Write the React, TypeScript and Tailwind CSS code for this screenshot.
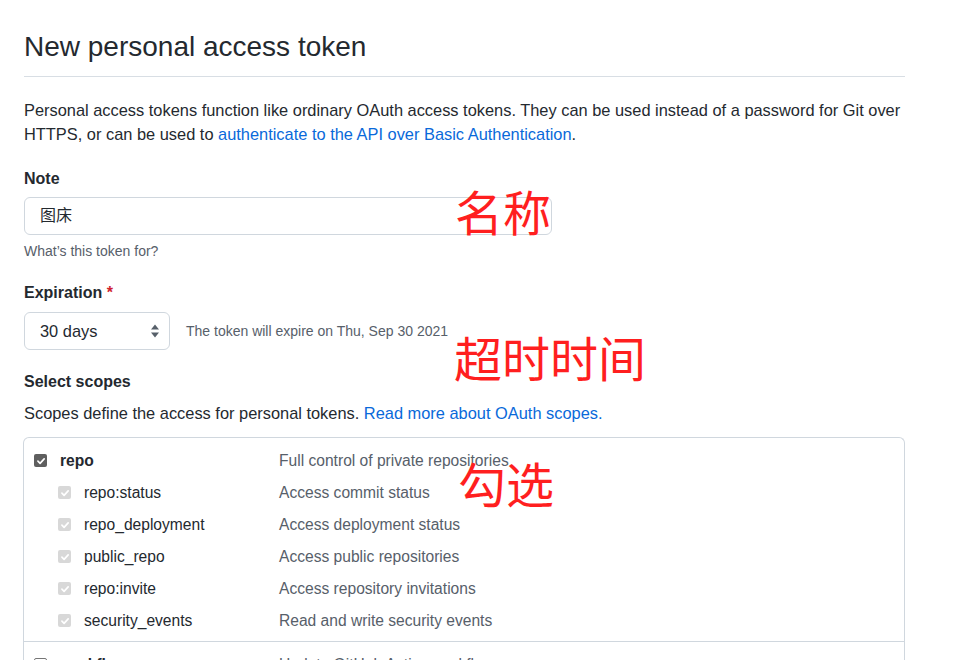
const font = { fontFamily: '"Liberation Sans", "Noto Sans CJK SC", sans-serif' }
const cjk = { fontFamily: '"Noto Sans CJK SC", sans-serif' }

const subScopes = [
  { name: 'repo:status', desc: 'Access commit status' },
  { name: 'repo_deployment', desc: 'Access deployment status' },
  { name: 'public_repo', desc: 'Access public repositories' },
  { name: 'repo:invite', desc: 'Access repository invitations' },
  { name: 'security_events', desc: 'Read and write security events' },
]

function Check({ state }: { state: 'on' | 'disabled' | 'off' }) {
  if (state === 'off') {
    return <span className="block h-[13px] w-[13px] rounded-[2px] border border-[#767676] bg-white" />
  }
  return (
    <span
      className={`flex h-[13px] w-[13px] items-center justify-center rounded-[2px] ${state === 'on' ? 'bg-[#5f5f5f]' : 'bg-[#d8d8d8]'}`}
    >
      <svg viewBox="0 0 12 12" className="h-[10px] w-[10px]">
        <path d="M2.3 6.2 4.9 8.8 9.8 3.4" fill="none" stroke="white" strokeWidth="2" strokeLinecap="round" strokeLinejoin="round" />
      </svg>
    </span>
  )
}

function SelectArrows() {
  return (
    <svg viewBox="0 0 10 16" className="h-[16px] w-[10px] text-[#57606a]">
      <path d="M5 1.5 9 6.5H1Z M5 14.5 1 9.5H9Z" fill="currentColor" />
    </svg>
  )
}

export default function App() {
  return (
    <div className="relative min-h-[660px] w-[975px] overflow-hidden bg-white text-[#24292f]" style={font}>
      <div className="w-[881px] ml-6 pt-[29px]">
        <h1 className="border-b border-[#d8dee4] pb-[11px] text-[28px] font-normal leading-[36px]">New personal access token</h1>

        <p className="mt-[21px] text-[16.4px] leading-6">
          Personal access tokens function like ordinary OAuth access tokens. They can be used instead of a password for Git over
          HTTPS, or can be used to <a className="text-[#0969da]">authenticate to the API over Basic Authentication</a>.
        </p>

        <div className="mt-[21px]">
          <label className="block text-[16px] font-semibold leading-6">Note</label>
          <div className="mt-[6px] flex h-[38px] w-[528px] items-center rounded-md border border-[#d0d7de] px-[15px] text-[16px]">
            图床
          </div>
          <p className="mt-[6px] text-[14px] leading-5 text-[#57606a]">What’s this token for?</p>
        </div>

        <div className="mt-[20px]">
          <label className="block text-[16px] font-semibold leading-6">
            Expiration <span className="text-[#cf222e]">*</span>
          </label>
          <div className="mt-[7px] flex items-center gap-4">
            <div className="flex h-[38px] w-[146px] items-center justify-between rounded-md border border-[#d0d7de] pl-[15px] pr-[9px] text-[16.4px]">
              <span>30 days</span>
              <SelectArrows />
            </div>
            <span className="text-[14px] text-[#57606a]">The token will expire on Thu, Sep 30 2021</span>
          </div>
        </div>

        <div className="mt-[20px]">
          <h2 className="text-[16px] font-semibold leading-6">Select scopes</h2>
          <p className="mt-[7px] text-[16.4px] leading-6">
            Scopes define the access for personal tokens. <a className="text-[#0969da]">Read more about OAuth scopes.</a>
          </p>
        </div>

        <div className="-ml-px mt-[12px] rounded-t-md border-x border-t border-[#d0d7de]">
          <div className="border-b border-[#d0d7de] pb-[4px] pt-[7px] pl-[10px] text-[15.6px]">
            <div className="grid h-8 grid-cols-[245px_1fr] items-center">
              <div className="flex items-center gap-[13px]">
                <Check state="on" />
                <span className="font-semibold">repo</span>
              </div>
              <span className="text-[#57606a]">Full control of private repositories</span>
            </div>
            {subScopes.map((s) => (
              <div key={s.name} className="grid h-8 grid-cols-[245px_1fr] items-center">
                <div className="flex items-center gap-[13px] pl-6">
                  <Check state="disabled" />
                  <span>{s.name}</span>
                </div>
                <span className="text-[#57606a]">{s.desc}</span>
              </div>
            ))}
          </div>
          <div className="pt-[7px] pl-[10px] text-[15.6px]">
            <div className="grid h-8 grid-cols-[245px_1fr] items-center">
              <div className="flex items-center gap-[13px]">
                <Check state="off" />
                <span className="font-semibold">workflow</span>
              </div>
              <span className="text-[#57606a]">Update GitHub Action workflows</span>
            </div>
          </div>
        </div>
      </div>

      <div className="absolute left-[455px] top-[186px] text-[48px] leading-none text-[#ff1f1f]" style={cjk}>
        名称
      </div>
      <div className="absolute left-[454px] top-[332px] text-[48px] leading-none text-[#ff1f1f]" style={cjk}>
        超时时间
      </div>
      <div className="absolute left-[458px] top-[458px] text-[48px] leading-none text-[#ff1f1f]" style={cjk}>
        勾选
      </div>
    </div>
  )
}
